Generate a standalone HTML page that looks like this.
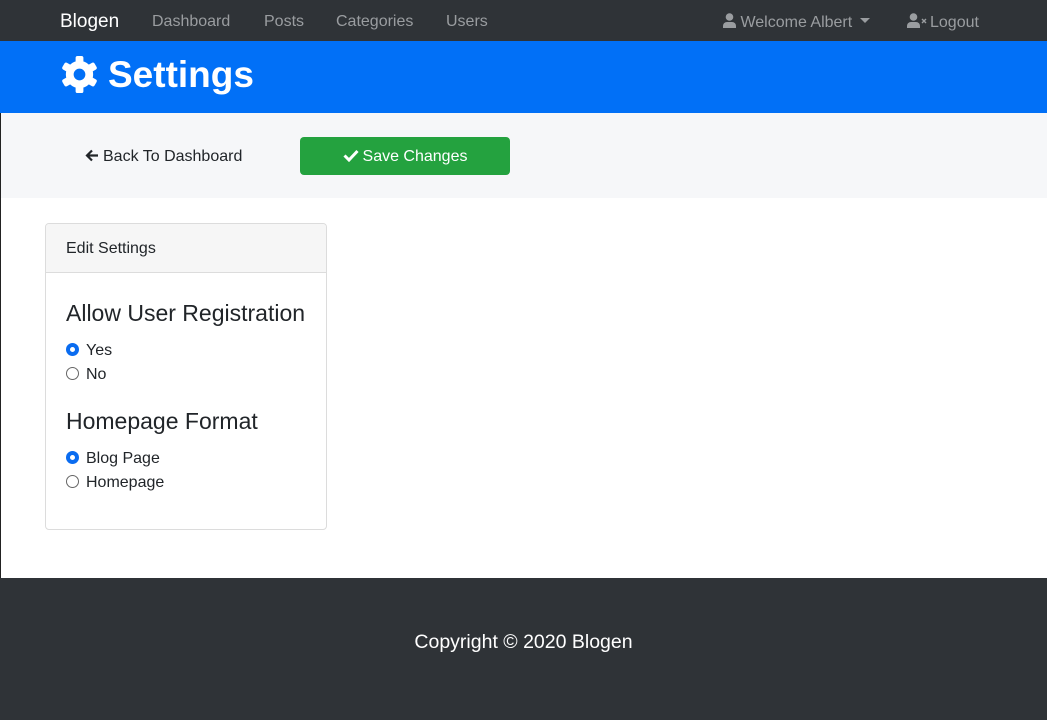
<!DOCTYPE html>
<html><head><style>
*{box-sizing:border-box;margin:0;padding:0}
body{width:1047px;height:720px;overflow:hidden;font-family:"Liberation Sans",sans-serif;background:#fff;position:relative;color:#212529}
.nav{position:absolute;top:0;left:0;width:1047px;height:41px;background:#2f3337}
.nav span{position:absolute;top:13px;font-size:16px;color:#9a9da0}
.blue{position:absolute;top:41px;left:0;width:1047px;height:72px;background:#0170f7}
.light{position:absolute;top:113px;left:0;width:1047px;height:85px;background:#f6f7f9}
.leftline{position:absolute;left:0;top:113px;width:1px;height:465px;background:#222}
.card{position:absolute;left:45px;top:223px;width:282px;height:307px;border:1px solid #dcdcdc;border-radius:4px;overflow:hidden}
.card .hd{height:49px;background:#f6f6f6;border-bottom:1px solid #dcdcdc;padding:16px 0 0 20px;font-size:16px}
h5{position:absolute;left:20px;font-size:23px;font-weight:normal}
.r{position:absolute;left:20px;font-size:16px}
.r i{display:inline-block;width:13px;height:13px;border-radius:50%;border:1px solid #666;vertical-align:-1px;margin-right:7px}
.r i.on{border:4px solid #0a6cf0;background:#fff}
.foot{position:absolute;top:578px;left:0;width:1047px;height:142px;background:#2f3337;color:#fff;font-size:19.5px;text-align:center;padding-top:53px}
</style></head><body>
<div class="nav">
<span style="left:60px;color:#fff;font-size:19px;top:11px">Blogen</span>
<span style="left:152px">Dashboard</span>
<span style="left:264px">Posts</span>
<span style="left:336px">Categories</span>
<span style="left:446px">Users</span>
<span style="left:723px"><svg width="13" height="15" viewBox="0 0 13 15" style="vertical-align:-1px"><circle cx="6.5" cy="4" r="3.8" fill="#9a9da0"/><path d="M0 15v-2a4 4 0 0 1 4-4h5a4 4 0 0 1 4 4v2z" fill="#9a9da0"/></svg> Welcome Albert <svg width="10" height="6" viewBox="0 0 10 6" style="vertical-align:3px;margin-left:3px"><path d="M0 0h10L5 5z" fill="#9a9da0"/></svg></span>
<span style="left:907px"><svg width="20" height="15" viewBox="0 0 20 15" style="vertical-align:-1px;margin-right:3px"><circle cx="6.5" cy="4" r="3.8" fill="#9a9da0"/><path d="M0 15v-2a4 4 0 0 1 4-4h5a4 4 0 0 1 4 4v2z" fill="#9a9da0"/><path d="M15 6l4 4M19 6l-4 4" stroke="#9a9da0" stroke-width="1.4"/></svg>Logout</span>
</div>
<div class="blue">
<svg style="position:absolute;left:60px;top:14px" width="39" height="39" viewBox="0 0 40 40"><g fill="#fff"><circle cx="20" cy="20" r="14"/><g id="t"><rect x="16" y="1" width="8" height="9" rx="2"/></g><use href="#t" transform="rotate(60 20 20)"/><use href="#t" transform="rotate(120 20 20)"/><use href="#t" transform="rotate(180 20 20)"/><use href="#t" transform="rotate(240 20 20)"/><use href="#t" transform="rotate(300 20 20)"/></g><circle cx="20" cy="20" r="6" fill="#0170f7"/></svg>
<div style="position:absolute;left:108px;top:13px;color:#fff;font-size:37px;font-weight:bold">Settings</div>
</div>
<div class="light">
<div style="position:absolute;left:85px;top:35px;font-size:16px"><svg width="14" height="13" viewBox="0 0 14 13" style="vertical-align:-1px;margin-right:4px"><path d="M13 6.5H2M7 1.5L2 6.5l5 5" stroke="#212529" stroke-width="2.2" fill="none"/></svg>Back To Dashboard</div>
<div style="position:absolute;left:300px;top:24px;width:210px;height:38px;background:#24a23f;border-radius:4px;color:#fff;font-size:16px;text-align:center;padding-top:11px"><svg width="16" height="13" viewBox="0 0 16 13" style="vertical-align:-1px;margin-right:4px"><path d="M1.5 6.5l4.5 4.5 8.5-9" stroke="#fff" stroke-width="3" fill="none"/></svg>Save Changes</div>
</div>
<div class="leftline"></div>
<div class="card">
<div class="hd">Edit Settings</div>
<h5 style="top:76px">Allow User Registration</h5>
<div class="r" style="top:118px"><i class="on"></i>Yes</div>
<div class="r" style="top:142px"><i></i>No</div>
<h5 style="top:184px">Homepage Format</h5>
<div class="r" style="top:226px"><i class="on"></i>Blog Page</div>
<div class="r" style="top:250px"><i></i>Homepage</div>
</div>
<div class="foot">Copyright © 2020 Blogen</div>
</body></html>
